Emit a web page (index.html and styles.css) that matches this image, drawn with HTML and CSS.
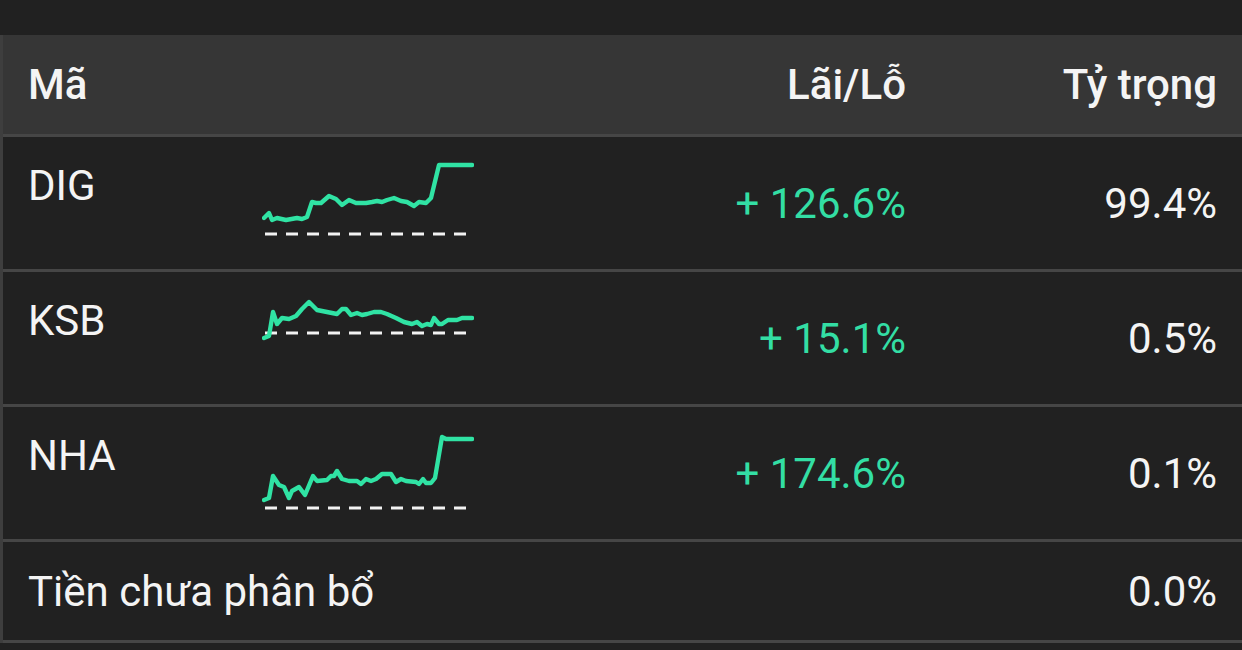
FILE: index.html
```html
<!DOCTYPE html>
<html lang="vi">
<head>
<meta charset="utf-8">
<link rel="stylesheet" href="styles.css">
</head>
<body>
<div class="page">
  <div class="table">
    <div class="row head">
      <div class="c-label">Mã</div>
      <div class="c-chart"></div>
      <div class="c-val">Lãi/Lỗ</div>
      <div class="c-weight">Tỷ trọng</div>
    </div>
    <div class="row item">
      <div class="c-label top">DIG</div>
      <svg class="c-chart spark" viewBox="263 137 212 132" width="212" height="132">
        <line class="base" x1="266" y1="234" x2="470" y2="234"/>
        <polyline class="line" points="265,218 270,213 273,220 278,218 287,220 298,218 303,219 308,217 313,202 317,203 322,203 330,196 337,199 343,205 350,200 357,203 367,203 373,202 378,201 383,202 388,200 395,198 402,201 408,202 415,206 420,202 427,203 432,198 440,165 443,165 473,165"/>
      </svg>
      <div class="c-val up">+ 126.6%</div>
      <div class="c-weight">99.4%</div>
    </div>
    <div class="row item">
      <div class="c-label top">KSB</div>
      <svg class="c-chart spark" viewBox="263 271 212 132" width="212" height="132">
        <line class="base" x1="266" y1="332" x2="470" y2="332"/>
        <polyline class="line" points="265,337 270,335 274,311 278,323 283,317 290,318 297,315 303,308 310,301 318,309 328,311 333,312 338,313 343,308 347,308 352,314 358,312 363,314 368,313 375,311 382,311 388,313 397,317 405,321 413,323 418,321 423,325 428,323 432,324 435,317 440,323 443,323 449,319 458,319 463,317 473,317"/>
      </svg>
      <div class="c-val up">+ 15.1%</div>
      <div class="c-weight">0.5%</div>
    </div>
    <div class="row item">
      <div class="c-label top">NHA</div>
      <svg class="c-chart spark" viewBox="263 406 212 132" width="212" height="132">
        <line class="base" x1="266" y1="507" x2="470" y2="507"/>
        <polyline class="line" points="265,499 270,497 274,475 280,484 285,486 290,497 293,490 300,486 306,494 314,475 318,480 328,479 332,475 335,475 338,470 343,478 350,480 358,480 362,483 367,478 372,480 377,478 383,473 392,473 397,481 402,478 407,480 417,481 420,483 424,478 427,482 432,482 436,477 443,436 447,438 473,438"/>
      </svg>
      <div class="c-val up">+ 174.6%</div>
      <div class="c-weight">0.1%</div>
    </div>
    <div class="row cash">
      <div class="c-label wide">Tiền chưa phân bổ</div>
      <div class="c-weight">0.0%</div>
    </div>
  </div>
</div>
</body>
</html>
```

FILE: styles.css
```css
html, body {
  margin: 0;
  padding: 0;
  background: #212121;
}

.page {
  width: 1242px;
  height: 650px;
  padding-top: 35px;
  box-sizing: border-box;
  font-family: Roboto, "Noto Sans", sans-serif;
  color: #f4f4f4;
  overflow: hidden;
}

.table {
  border-left: 3px solid #3e3e3e;
}

.row {
  display: grid;
  grid-template-columns: 234px 212px 1fr 311px;
  padding: 0 25px 0 25px;
  border-bottom: 3px solid #464646;
  font-size: 42px;
  line-height: 49px;
}

.head {
  height: 99px;
  background: #363636;
  align-items: center;
  font-weight: 500;
}

.item {
  height: 132px;
  align-items: center;
}

.cash {
  height: 98px;
  align-items: center;
  grid-template-columns: 1fr 311px;
}

.c-label.top {
  align-self: start;
  padding-top: 24px;
}

.c-chart {
  display: block;
}

.spark {
  align-self: stretch;
  height: 132px;
}

.spark .line {
  fill: none;
  stroke: #30e3a4;
  stroke-width: 4.4;
  stroke-linejoin: round;
  stroke-linecap: round;
}

.spark .base {
  stroke: #f2f2f2;
  stroke-width: 3;
  stroke-dasharray: 12 9;
}

.c-val,
.c-weight {
  text-align: right;
}

.up {
  color: #33dea4;
}
```
